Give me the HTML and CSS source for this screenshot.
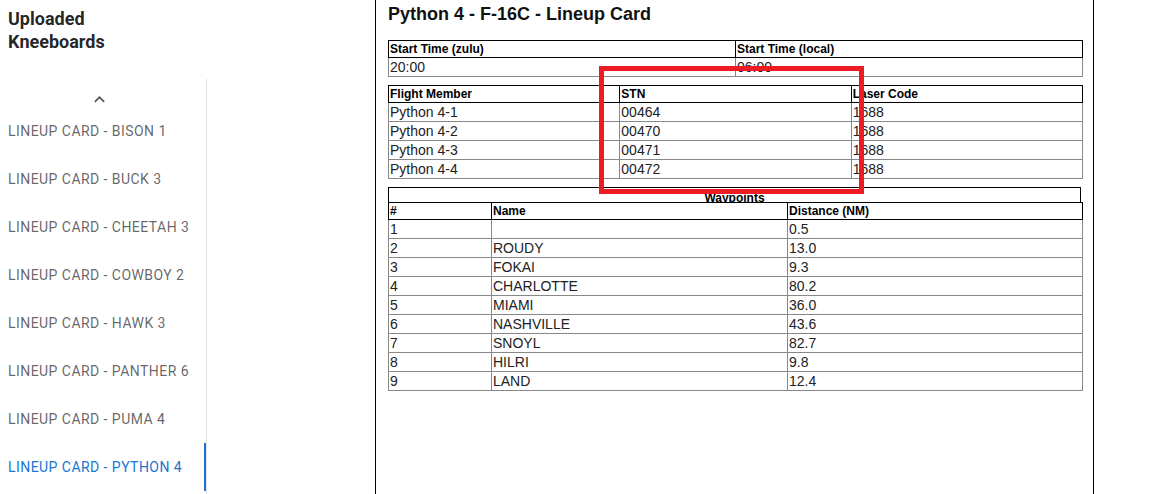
FILE: index.html
```html
<!DOCTYPE html>
<html lang="en">
<head>
<meta charset="utf-8">
<title>Uploaded Kneeboards</title>
<link rel="stylesheet" href="styles.css">
</head>
<body>
<div class="app">
  <aside class="sidebar">
    <h2 class="side-title">Uploaded Kneeboards</h2>
    <div class="tabs">
      <div class="scroll-btn">
        <svg width="21" height="21" viewBox="0 0 24 24"><path d="M7.41 15.41 12 10.83l4.59 4.58L18 14l-6-6-6 6z" fill="#555"/></svg>
      </div>
      <div class="scroller">
        <div class="tab-list">
          <div class="tab">Lineup Card - Bison 1</div>
          <div class="tab">Lineup Card - Buck 3</div>
          <div class="tab">Lineup Card - Cheetah 3</div>
          <div class="tab">Lineup Card - Cowboy 2</div>
          <div class="tab">Lineup Card - Hawk 3</div>
          <div class="tab">Lineup Card - Panther 6</div>
          <div class="tab">Lineup Card - Puma 4</div>
          <div class="tab active">Lineup Card - Python 4</div>
        </div>
      </div>
    </div>
  </aside>
  <main class="panel">
    <h1 class="card-title">Python 4 - F-16C - Lineup Card</h1>
    <table class="grid two">
      <tr><th>Start Time (zulu)</th><th>Start Time (local)</th></tr>
      <tr><td>20:00</td><td>06:00</td></tr>
    </table>
    <table class="grid three">
      <tr><th>Flight Member</th><th>STN</th><th>Laser Code</th></tr>
      <tr><td>Python 4-1</td><td>00464</td><td>1688</td></tr>
      <tr><td>Python 4-2</td><td>00470</td><td>1688</td></tr>
      <tr><td>Python 4-3</td><td>00471</td><td>1688</td></tr>
      <tr><td>Python 4-4</td><td>00472</td><td>1688</td></tr>
    </table>
    <div class="wp-caption">Waypoints</div>
    <table class="grid wp">
      <tr><th class="c-num">#</th><th class="c-name">Name</th><th>Distance (NM)</th></tr>
      <tr><td>1</td><td></td><td>0.5</td></tr>
      <tr><td>2</td><td>ROUDY</td><td>13.0</td></tr>
      <tr><td>3</td><td>FOKAI</td><td>9.3</td></tr>
      <tr><td>4</td><td>CHARLOTTE</td><td>80.2</td></tr>
      <tr><td>5</td><td>MIAMI</td><td>36.0</td></tr>
      <tr><td>6</td><td>NASHVILLE</td><td>43.6</td></tr>
      <tr><td>7</td><td>SNOYL</td><td>82.7</td></tr>
      <tr><td>8</td><td>HILRI</td><td>9.8</td></tr>
      <tr><td>9</td><td>LAND</td><td>12.4</td></tr>
    </table>
  </main>
</div>
<div class="highlight"></div>
</body>
</html>
```
FILE: styles.css
```css
* { box-sizing: border-box; }
html, body { margin: 0; padding: 0; background: #fff; }
body { height: 494px; overflow: hidden; }

.app {
  display: flex;
  height: 100vh;
}

.sidebar {
  width: 375px;
  flex: none;
  padding-top: 7px;
  display: flex;
  flex-direction: column;
  font-family: Roboto, "Liberation Sans", sans-serif;
}

.side-title {
  margin: 0 0 26px 8px;
  width: 130px;
  font-size: 18px;
  line-height: 23px;
  font-weight: 700;
  color: rgba(0, 0, 0, 0.87);
}

.tabs {
  width: 207px;
  flex: 1;
  min-height: 0;
  border-right: 1px solid #e0e0e0;
  display: flex;
  flex-direction: column;
}

.scroll-btn {
  height: 40px;
  flex: none;
  display: flex;
  align-items: center;
  justify-content: center;
  padding-right: 7px;
}
.scroll-btn svg { display: block; }

.scroller {
  flex: 1;
  min-height: 0;
  overflow: hidden;
}

.tab-list {
  margin-top: -12px;
  display: flex;
  flex-direction: column;
}

.tab {
  height: 48px;
  display: flex;
  align-items: center;
  padding-left: 8px;
  font-size: 14px;
  font-weight: 400;
  letter-spacing: 0.45px;
  text-transform: uppercase;
  color: rgba(0, 0, 0, 0.62);
  white-space: nowrap;
}
.tab.active {
  color: #1976d2;
  box-shadow: inset -2px 0 0 #1976d2;
}

.panel {
  width: 719px;
  flex: none;
  height: 100%;
  border-left: 1px solid #000;
  border-right: 1px solid #000;
  padding: 0 10px 0 12px;
  font-family: "Liberation Sans", Arial, sans-serif;
}

.card-title {
  margin: 4px 0 15px;
  font-size: 18px;
  line-height: 21px;
  font-weight: 700;
  color: #111;
}

.grid {
  width: 100%;
  border-collapse: collapse;
  table-layout: fixed;
  margin-bottom: 8px;
}
.grid th {
  border: 1px solid #000;
  padding: 1px 1px;
  font-size: 12px;
  line-height: 14px;
  font-weight: 700;
  text-align: left;
  color: #000;
}
.grid td {
  border: 1px solid #888;
  padding: 1px 1px;
  font-size: 14px;
  line-height: 16px;
  color: #222;
  height: 19px;
}

.wp .c-num { width: 103px; }
.wp .c-name { width: 296px; }

.wp-caption {
  margin-right: 2px;
  height: 15px;
  border: 1px solid #000;
  border-bottom: none;
  overflow: hidden;
  padding-top: 3px;
  font-size: 12px;
  line-height: 14px;
  font-weight: 700;
  text-align: center;
  color: #000;
}
.wp { margin-bottom: 0; }

.highlight {
  position: absolute;
  left: 599px;
  top: 66px;
  width: 265px;
  height: 128px;
  border: 5px solid #ed1c24;
  pointer-events: none;
}
```
